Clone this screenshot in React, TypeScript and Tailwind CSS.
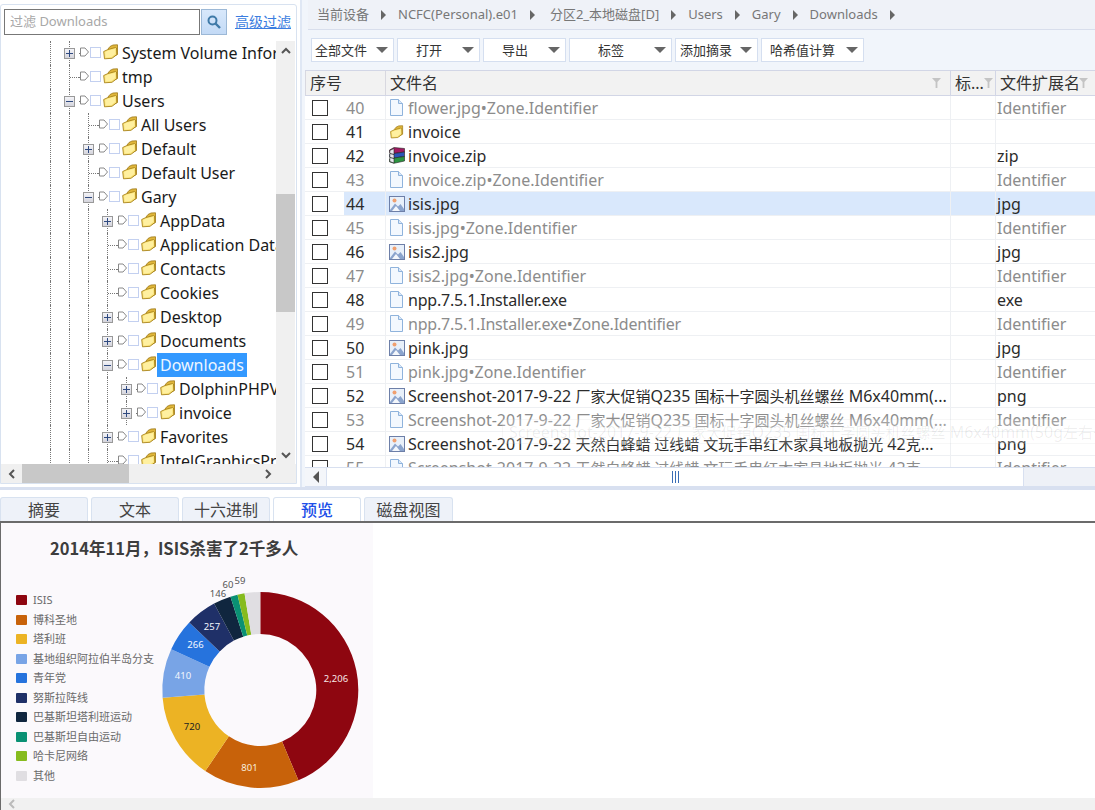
import React from "react";

function Folder({ small = false }: { small?: boolean }) {
  return (
    <svg width={15} height={small ? 14 : 16} viewBox="0 0 15 16" className="shrink-0">
      <path d="M5 5 L7 2.5 L10 1 L14.5 0.8 V10.5 L10 13 Z" fill="#e0b63a" stroke="#9c7716" strokeWidth="0.8" />
      <path d="M0.7 7.5 L5 5.5 L12.5 3.5 L13.5 4 L13.8 10.5 L9 14.3 L1.5 14.8 Z" fill="#fbe57c" stroke="#a98318" strokeWidth="0.9" />
      <path d="M2.2 8 L5.5 6.6 L12 5 L12.3 9.8 L8.3 13 L2.8 13.4 Z" fill="#fff0a0" />
    </svg>
  );
}

function Doc() {
  return (
    <svg width="15" height="17" viewBox="0 0 15 17" className="shrink-0">
      <path d="M1.5 0.5 H9.5 L13.5 4.5 V16.5 H1.5 Z" fill="#f3f8fe" stroke="#8fb3dc" />
      <path d="M9.5 0.5 V4.5 H13.5" fill="#dbe8f7" stroke="#8fb3dc" />
    </svg>
  );
}

function Pic() {
  return (
    <svg width="16" height="16" viewBox="0 0 16 16" className="shrink-0">
      <rect x="0.5" y="0.5" width="15" height="15" fill="#e8f0fa" stroke="#6d7fa8" />
      <circle cx="5.5" cy="4.5" r="2" fill="#f0a070" />
      <path d="M1 14 L6 7.5 L9 10.5 L11.5 8 L15 13 V15 H1 Z" fill="#8ba4cd" />
      <path d="M3 15 L7 10 L11 15 Z" fill="#f4f7fb" />
    </svg>
  );
}

function Zip() {
  return (
    <svg width="16" height="17" viewBox="0 0 16 17" className="shrink-0">
      <path d="M0.5 3 L5 0.5 L15.5 1.5 V5 L5 6.5 L0.5 5.5 Z" fill="#a01a62" stroke="#222" strokeWidth="0.6" />
      <path d="M0.5 7.5 L5 6.5 L15.5 5 V9.5 L5 11 L0.5 10 Z" fill="#2a55b8" stroke="#222" strokeWidth="0.6" />
      <path d="M0.5 12 L5 11 L15.5 9.5 V14 L5 16.3 L0.5 14.8 Z" fill="#2c9440" stroke="#222" strokeWidth="0.6" />
      <path d="M0.8 3.4 L5 1.5 V16 L0.8 14.5 Z" fill="#e8e8ee" stroke="#222" strokeWidth="0.6" />
      <path d="M1 6.5 L5 7.5 M1 10.5 L5 11.5" stroke="#222" strokeWidth="0.8" />
    </svg>
  );
}

function Caret() {
  return <div className="w-0 h-0 border-x-[6px] border-x-transparent border-t-[6px] border-t-[#666]" />;
}

function Funnel() {
  return (
    <svg width="9" height="10" viewBox="0 0 9 10" className="shrink-0">
      <path d="M0 0 H9 L5.4 4 V10 H3.6 V4 Z" fill="#c4c4c4" />
    </svg>
  );
}

function Chev({ d, color = "#555" }: { d: string; color?: string }) {
  return (
    <svg width="12" height="12" viewBox="0 0 12 12">
      <path d={d} fill="none" stroke={color} strokeWidth="2" />
    </svg>
  );
}

type TreeItem = { label: string; level: number; kind: "plus" | "minus" | "none"; selected?: boolean };

const tree: TreeItem[] = [
  { label: "System Volume Information", level: 0, kind: "plus" },
  { label: "tmp", level: 0, kind: "none" },
  { label: "Users", level: 0, kind: "minus" },
  { label: "All Users", level: 1, kind: "none" },
  { label: "Default", level: 1, kind: "plus" },
  { label: "Default User", level: 1, kind: "none" },
  { label: "Gary", level: 1, kind: "minus" },
  { label: "AppData", level: 2, kind: "plus" },
  { label: "Application Data", level: 2, kind: "none" },
  { label: "Contacts", level: 2, kind: "none" },
  { label: "Cookies", level: 2, kind: "none" },
  { label: "Desktop", level: 2, kind: "plus" },
  { label: "Documents", level: 2, kind: "plus" },
  { label: "Downloads", level: 2, kind: "minus", selected: true },
  { label: "DolphinPHPV1.3.0", level: 3, kind: "plus" },
  { label: "invoice", level: 3, kind: "plus" },
  { label: "Favorites", level: 2, kind: "plus" },
  { label: "IntelGraphicsProfiles", level: 2, kind: "none" },
];

function Guide() {
  return (
    <div className="w-[19px] h-full flex justify-center shrink-0">
      <div className="h-full border-l border-dotted border-[#777]" />
    </div>
  );
}

function TreeRow({ item }: { item: TreeItem }) {
  return (
    <div className="h-6 flex items-center whitespace-nowrap">
      <div className="w-[41px] shrink-0" />
      {Array.from({ length: item.level + 2 }).map((_, i) => (
        <Guide key={i} />
      ))}
      <div className="w-[19px] h-full shrink-0 flex items-center justify-center ml-[-19px] relative">
        {item.kind === "none" ? (
          <div className="w-[10px] ml-[10px] border-t border-dotted border-[#777]" />
        ) : (
          <div className="w-[11px] h-[11px] border border-[#999] bg-gradient-to-b from-[#f4f4f8] to-[#d4d4dc] flex items-center justify-center relative">
            <div className="w-[7px] border-t border-[#2f4a80]" />
            {item.kind === "plus" && <div className="absolute h-[7px] border-l border-[#2f4a80]" />}
          </div>
        )}
      </div>
      <div className="w-[1px] border-t border-dotted border-[#777] shrink-0" />
      <svg width="9" height="10" viewBox="0 0 9 10" className="shrink-0 mt-[-2px]">
        <path d="M0.5 1 H5 L8.5 5 L5 9 H0.5 Z" fill="#fff" stroke="#888" />
      </svg>
      <div className="w-[11px] h-[11px] border border-[#c3d0f0] bg-white ml-[1px] shrink-0 mt-[-2px]" />
      <div className="ml-[2px] mt-[-2px] shrink-0">
        <Folder />
      </div>
      <span
        className={
          item.selected
            ? "ml-[1px] px-[3px] h-6 leading-6 text-[16px] bg-[#3399ff] text-[#eef6ff]"
            : "ml-[1px] px-[3px] h-6 leading-6 text-[16px] text-[#1a1a1a]"
        }
      >
        {item.label}
      </span>
    </div>
  );
}

function Z({ children }: { children: React.ReactNode }) {
  return <span className="text-[15px]">{children}</span>;
}

type FileRow = { n: number; name: React.ReactNode; ext: string; icon: "doc" | "folder" | "zip" | "pic"; grey?: boolean; sel?: boolean; tight?: boolean };
const L1 = (
  <>
    Screenshot-2017-9-22 <Z>厂家大促销</Z>Q235 <Z>国标十字圆头机丝螺丝</Z> M6x40mm(...
  </>
);
const L2 = (
  <>
    Screenshot-2017-9-22 <Z>天然白蜂蜡 过线蜡 文玩手串红木家具地板抛光</Z> 42<Z>克</Z>...
  </>
);
const rows: FileRow[] = [
  { n: 40, name: "flower.jpg•Zone.Identifier", ext: "Identifier", icon: "doc", grey: true },
  { n: 41, name: "invoice", ext: "", icon: "folder" },
  { n: 42, name: "invoice.zip", ext: "zip", icon: "zip" },
  { n: 43, name: "invoice.zip•Zone.Identifier", ext: "Identifier", icon: "doc", grey: true },
  { n: 44, name: "isis.jpg", ext: "jpg", icon: "pic", sel: true },
  { n: 45, name: "isis.jpg•Zone.Identifier", ext: "Identifier", icon: "doc", grey: true },
  { n: 46, name: "isis2.jpg", ext: "jpg", icon: "pic" },
  { n: 47, name: "isis2.jpg•Zone.Identifier", ext: "Identifier", icon: "doc", grey: true },
  { n: 48, name: "npp.7.5.1.Installer.exe", ext: "exe", icon: "doc", tight: true },
  { n: 49, name: "npp.7.5.1.Installer.exe•Zone.Identifier", ext: "Identifier", icon: "doc", grey: true, tight: true },
  { n: 50, name: "pink.jpg", ext: "jpg", icon: "pic" },
  { n: 51, name: "pink.jpg•Zone.Identifier", ext: "Identifier", icon: "doc", grey: true },
  { n: 52, name: L1, ext: "png", icon: "pic" },
  { n: 53, name: L1, ext: "Identifier", icon: "doc", grey: true },
  { n: 54, name: L2, ext: "png", icon: "pic" },
  { n: 55, name: L2, ext: "Identifier", icon: "doc", grey: true },
];

function FileIcon({ icon }: { icon: FileRow["icon"] }) {
  if (icon === "folder") return <Folder small />;
  if (icon === "zip") return <Zip />;
  if (icon === "pic") return <Pic />;
  return <Doc />;
}

function Row({ r }: { r: FileRow }) {
  const text = r.grey ? "text-[#8c8c8c]" : "text-[#2b2b2b]";
  return (
    <div className={`h-6 flex border-b border-[#eef0f3] text-[16px] leading-6 whitespace-nowrap ${text}`}>
      <div className="w-[39px] pl-[7px] flex items-center shrink-0">
        <div className="w-4 h-4 border border-[#333] bg-white" />
      </div>
      <div className={r.sel ? "w-[42px] shrink-0 bg-[#d9e8fc] border-r border-[#eef0f3] pl-[2px]" : "w-[42px] shrink-0 border-r border-[#eef0f3] pl-[2px]"}>
        {r.n}
      </div>
      <div className={r.sel ? "w-[565px] shrink-0 flex items-center bg-[#d9e8fc] border-r border-[#eef0f3] pl-[3px]" : "w-[565px] shrink-0 flex items-center border-r border-[#eef0f3] pl-[3px]"}>
        <div className="w-[19px] shrink-0 flex items-center">
          <FileIcon icon={r.icon} />
        </div>
        <span className={r.tight ? "tracking-[-0.2px]" : ""}>{r.name}</span>
      </div>
      <div className={r.sel ? "w-[45px] shrink-0 bg-[#d9e8fc] border-r border-[#eef0f3]" : "w-[45px] shrink-0 border-r border-[#eef0f3]"} />
      <div className={r.sel ? "flex-1 pl-[1px] bg-[#d9e8fc]" : "flex-1 pl-[1px]"}>{r.ext}</div>
    </div>
  );
}

const buttons = [
  { label: "全部文件", w: "w-[83px]", cls: "pl-[3px]" },
  { label: "打开", w: "w-[83px]", cls: "pl-[18px]" },
  { label: "导出", w: "w-[83px]", cls: "pl-[18px]" },
  { label: "标签", w: "w-[103px]", cls: "pl-[28px]" },
  { label: "添加摘录", w: "w-[83px]", cls: "pl-[4px]" },
  { label: "哈希值计算", w: "w-[103px]", cls: "pl-[8px]" },
];

const crumbs = [
  { t: "当前设备", c: "" },
  { t: "NCFC(Personal).e01", c: "" },
  { t: "分区2_本地磁盘[D]", c: "ml-[3px]" },
  { t: "Users", c: "" },
  { t: "Gary", c: "" },
  { t: "Downloads", c: "" },
];

const tabs = [
  { label: "摘要", w: "w-[88px]" },
  { label: "文本", w: "w-[88px]" },
  { label: "十六进制", w: "w-[88px]" },
  { label: "预览", w: "w-[88px]", active: true },
  { label: "磁盘视图", w: "w-[89px]" },
];

const slices = [
  { name: "ISIS", v: 2206, fill: "#8e0610", sw: "bg-[#8e0610]" },
  { name: "博科圣地", v: 801, fill: "#c8620a", sw: "bg-[#c8620a]" },
  { name: "塔利班", v: 720, fill: "#ecb324", sw: "bg-[#ecb324]" },
  { name: "基地组织阿拉伯半岛分支", v: 410, fill: "#78a4e6", sw: "bg-[#78a4e6]" },
  { name: "青年党", v: 266, fill: "#2673dd", sw: "bg-[#2673dd]" },
  { name: "努斯拉阵线", v: 257, fill: "#1f3068", sw: "bg-[#1f3068]" },
  { name: "巴基斯坦塔利班运动", v: 146, fill: "#10263f", sw: "bg-[#10263f]" },
  { name: "巴基斯坦自由运动", v: 60, fill: "#0a9174", sw: "bg-[#0a9174]" },
  { name: "哈卡尼网络", v: 59, fill: "#86bb1e", sw: "bg-[#86bb1e]" },
  { name: "其他", v: 130, fill: "#e0dee2", sw: "bg-[#e0dee2]" },
];

const labels = [
  { t: "2,206", x: 186, y: 109, c: "#f6e6e6" },
  { t: "801", x: 99.5, y: 198, c: "#f8eedd" },
  { t: "720", x: 42, y: 157, c: "#222" },
  { t: "410", x: 33, y: 106, c: "#f2f6fd" },
  { t: "266", x: 45.5, y: 75, c: "#f2f6fd" },
  { t: "257", x: 62, y: 57, c: "#f2f6fd" },
  { t: "146", x: 68, y: 24, c: "#555" },
  { t: "60", x: 78, y: 15, c: "#555" },
  { t: "59", x: 90, y: 11, c: "#555" },
];

function Donut() {
  const cx = 110.3;
  const cy = 120;
  const R = 98;
  const r = 56;
  const total = slices.reduce((s, x) => s + x.v, 0);
  let a = 0;
  const pt = (rad: number, ang: number) => `${cx + rad * Math.sin(ang)} ${cy - rad * Math.cos(ang)}`;
  return (
    <svg width="222" height="227" viewBox="0 0 222 227" className="shrink-0">
      {slices.map((s) => {
        const a0 = a;
        const a1 = a + (s.v / total) * Math.PI * 2;
        a = a1;
        const large = a1 - a0 > Math.PI ? 1 : 0;
        return (
          <path
            key={s.name}
            d={`M${pt(R, a0)} A${R} ${R} 0 ${large} 1 ${pt(R, a1)} L${pt(r, a1)} A${r} ${r} 0 ${large} 0 ${pt(r, a0)} Z`}
            fill={s.fill}
          />
        );
      })}
      {labels.map((l) => (
        <text key={l.t} x={l.x} y={l.y} fill={l.c} fontSize="9.5" textAnchor="middle" dominantBaseline="middle">
          {l.t}
        </text>
      ))}
    </svg>
  );
}

export default function App() {
  return (
    <div className="w-[1095px] h-[810px] overflow-hidden bg-white flex flex-col relative [font-family:'Noto_Sans','Noto_Sans_CJK_SC',sans-serif]">
      {/* top */}
      <div className="h-[490px] flex border-b-[3px] border-[#d8e0f0] shrink-0">
        {/* left pane */}
        <div className="w-[297px] mt-1 mb-[3px] border border-[#d8e2f0] rounded-t-[3px] flex flex-col shrink-0">
          <div className="h-[36px] flex items-start pl-[3px] pt-1 shrink-0">
            <div className="w-[196px] h-[26px] border border-[#777] flex items-center pl-[5px] text-[13px] text-[#a8a8a8] shrink-0">
              过滤 Downloads
            </div>
            <div className="w-[26px] h-[26px] ml-[1px] bg-gradient-to-b from-[#d8e8fb] to-[#c3daf6] border border-[#9cb8d6] flex items-center justify-center shrink-0">
              <svg width="14" height="14" viewBox="0 0 14 14">
                <circle cx="5.5" cy="5.5" r="4" fill="none" stroke="#3f7aa8" strokeWidth="2" />
                <path d="M8.5 8.5 L13 13" stroke="#3f7aa8" strokeWidth="2.4" />
              </svg>
            </div>
            <a className="ml-2 text-[14px] leading-[26px] text-[#3b7de0] underline whitespace-nowrap">高级过滤</a>
          </div>
          <div className="flex-1 min-h-0 flex flex-col">
            <div className="flex flex-1 min-h-0">
              <div className="w-[276px] overflow-hidden shrink-0 ml-[-1px]">
                {tree.map((t, i) => (
                  <TreeRow key={i} item={t} />
                ))}
              </div>
              <div className="w-[19px] bg-[#f0f0f0] flex flex-col shrink-0">
                <div className="h-[19px] flex items-center justify-center shrink-0">
                  <Chev d="M2 8 L6 4 L10 8" />
                </div>
                <div className="h-[134px] shrink-0" />
                <div className="h-[118px] bg-[#c8c8c8] shrink-0" />
                <div className="flex-1" />
                <div className="h-[19px] flex items-center justify-center shrink-0">
                  <Chev d="M2 4 L6 8 L10 4" />
                </div>
              </div>
            </div>
            <div className="h-[19px] bg-[#f0f0f0] flex items-center shrink-0">
              <div className="w-[21px] flex justify-center shrink-0">
                <Chev d="M8 2 L4 6 L8 10" />
              </div>
              <div className="w-[107px] h-full bg-[#c8c8c8] shrink-0" />
              <div className="flex-1" />
              <div className="w-[19px] flex justify-center shrink-0 mr-[19px]">
                <Chev d="M4 2 L8 6 L4 10" />
              </div>
            </div>
          </div>
        </div>
        <div className="w-[3px] shrink-0" />
        <div className="w-[2px] bg-[#dfe7f4] shrink-0" />
        {/* right pane */}
        <div className="flex-1 min-w-0 flex flex-col pl-[3px] bg-[#f1f5fb]">
          <div className="h-[30px] shrink-0 bg-[#eff2f8] border-b border-[#d8deec] flex items-center pl-[9px] text-[13px] text-[#777] whitespace-nowrap ml-[3px]">
            {crumbs.map((c) => (
              <React.Fragment key={c.t}>
                <span className={c.c}>{c.t}</span>
                <div className="mx-[12px] w-0 h-0 border-y-[5px] border-y-transparent border-l-[5px] border-l-[#666]" />
              </React.Fragment>
            ))}
          </div>
          <div className="h-10 shrink-0 flex items-center gap-[3px] pl-[6px]">
            {buttons.map((b) => (
              <div
                key={b.label}
                className={`${b.w} ${b.cls} h-6 bg-white border border-[#d5dff0] flex items-center justify-between pr-[5px] text-[13px] leading-[26px] text-[#333] whitespace-nowrap`}
              >
                <span>{b.label}</span>
                <Caret />
              </div>
            ))}
          </div>
          <div className="flex-1 min-h-0 overflow-hidden flex flex-col bg-white relative">
            <div className="h-[26px] shrink-0 bg-[#f2f2f2] border-y border-[#d2d6e6] flex text-[16px] leading-[24px] text-[#333] whitespace-nowrap">
              <div className="w-[81px] pl-[4px] border-x border-x-[#d8d8e0] shrink-0">序号</div>
              <div className="w-[565px] pl-[4px] border-r border-[#d2d6e6] flex items-center justify-between pr-[9px] shrink-0">
                <span>文件名</span>
                <Funnel />
              </div>
              <div className="w-[45px] pl-[4px] border-r border-[#d2d6e6] flex items-center justify-between pr-[8px] shrink-0">
                <span>标...</span>
                <Funnel />
              </div>
              <div className="flex-1 pl-[4px] flex items-center justify-between pr-[7px] min-w-0">
                <span>文件扩展名</span>
                <div className="ml-[-12px]">
                  <Funnel />
                </div>
              </div>
            </div>
            <div className="flex-1 min-h-0 overflow-hidden">
              {rows.map((r) => (
                <Row key={r.n} r={r} />
              ))}
            </div>
            <div className="absolute left-[197px] top-[349px] w-[600px] h-[25px] border border-black/[0.03] bg-white/20 text-[16px] leading-6 text-black/[0.07] whitespace-nowrap overflow-hidden pl-[6px]">
              Screenshot-2017-9-22 <Z>厂家大促销</Z>Q235 <Z>国标十字圆头机丝螺丝</Z> M6x40mm(50g<Z>左右一</Z>
            </div>
          </div>
          <div className="h-[20px] shrink-0 bg-white border-y border-[#d8e0f0] flex items-stretch">
            <div className="w-[22px] bg-[#f4f6fa] border-r border-[#d8e0f0] flex items-center justify-center shrink-0">
              <div className="w-0 h-0 border-y-[6px] border-y-transparent border-r-[6px] border-r-[#555]" />
            </div>
            <div className="w-[697px] border-r border-[#d8e0f0] flex items-center justify-center shrink-0">
              <div className="w-[7px] h-[12px] border-x border-[#3a6db5] flex justify-center">
                <div className="h-full border-l border-[#3a6db5]" />
              </div>
            </div>
            <div className="flex-1 bg-[#eef1f7]" />
          </div>
        </div>
      </div>

      {/* tabs */}
      <div className="h-[33px] shrink-0 flex items-end gap-[3px] border-b-2 border-[#6b6b6b]">
        {tabs.map((t) => (
          <div
            key={t.label}
            className={
              t.active
                ? `${t.w} h-6 bg-white border border-b-0 border-[#d8e2f0] rounded-t-[3px] text-center text-[16px] leading-6 font-medium text-[#1d4fe8] whitespace-nowrap`
                : `${t.w} h-6 bg-[#eef2f9] border border-b-0 border-[#d8e2f0] rounded-t-[3px] text-center text-[16px] leading-6 text-[#444] whitespace-nowrap`
            }
          >
            {t.label}
          </div>
        ))}
      </div>

      {/* preview */}
      <div className="flex-1 min-h-0 flex flex-col border-l border-[#6b6b6b]">
        <div className="flex-1 min-h-0 overflow-hidden">
          <div className="w-[372px] h-full bg-[#fbf9fc] flex flex-col">
            <div className="h-[47px] shrink-0 pl-[49px] pt-[13px] text-[16.5px] leading-6 font-bold text-[#3d3d3d] whitespace-nowrap [font-family:'Noto_Sans_CJK_SC','Noto_Sans',sans-serif]">
              2014年11月，ISIS杀害了2千多人
            </div>
            <div className="flex flex-1 min-h-0">
              <div className="w-[149px] shrink-0 pl-[15px] pt-[20.5px] flex flex-col">
                {slices.map((s) => (
                  <div key={s.name} className="h-[19.5px] flex items-center gap-[6px] text-[11px] text-[#6a6a6a] whitespace-nowrap">
                    <div className={`w-[11px] h-[10px] rounded-[1px] shrink-0 ${s.sw}`} />
                    <span>{s.name}</span>
                  </div>
                ))}
              </div>
              <Donut />
            </div>
          </div>
        </div>
        <div className="h-[12px] shrink-0 bg-[#f1f1f1] flex items-center pl-[5px]">
          <Chev d="M8 2 L4 6 L8 10" color="#bbb" />
        </div>
      </div>
    </div>
  );
}
